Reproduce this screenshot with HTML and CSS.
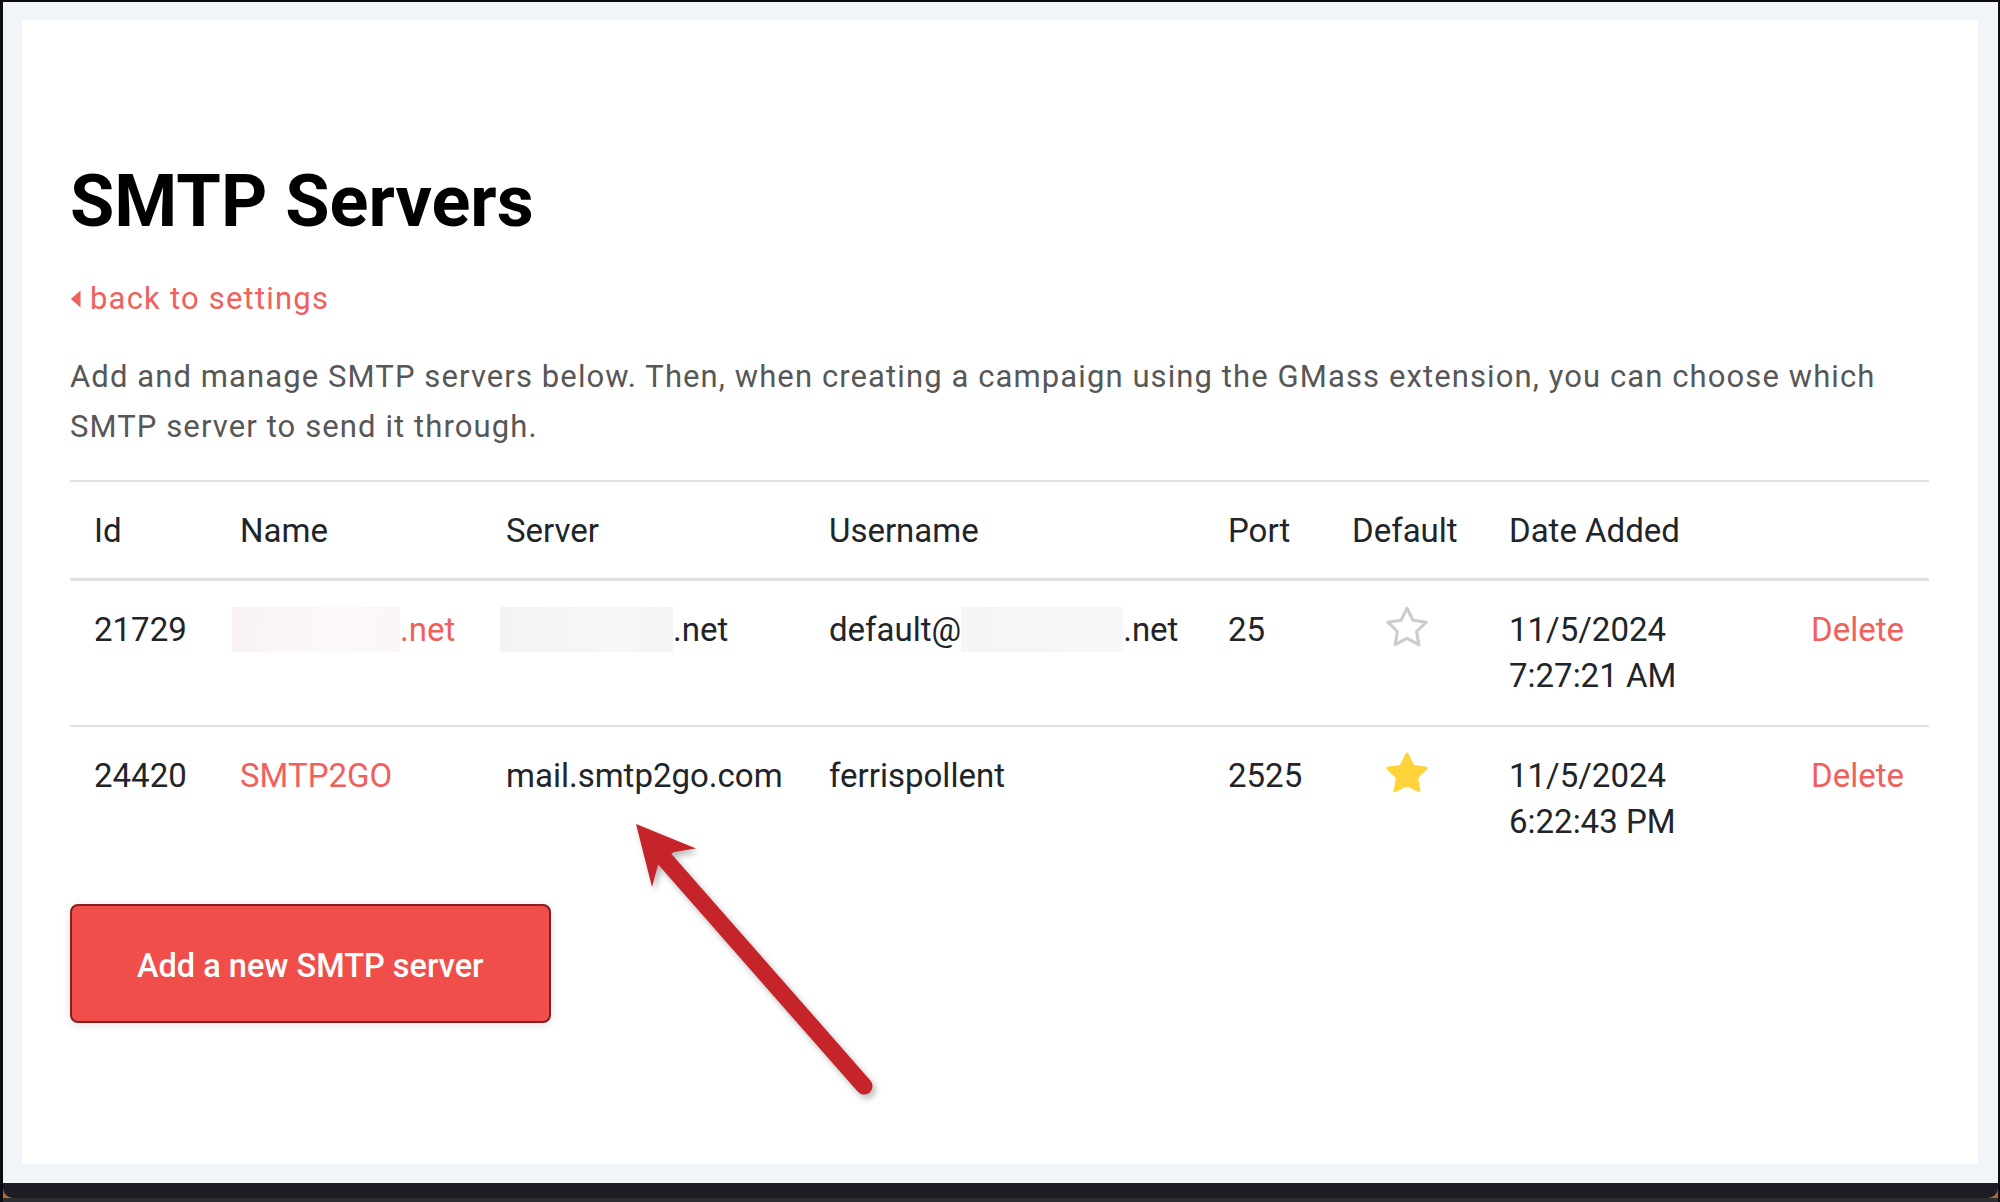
FILE: index.html
```html
<!DOCTYPE html>
<html lang="en">
<head>
<meta charset="utf-8">
<title>SMTP Servers</title>
<link rel="stylesheet" href="styles.css">
</head>
<body>
<div class="frame">
  <main class="panel">
    <h1 class="title">SMTP Servers</h1>
    <a class="back" href="#"><svg class="caret" viewBox="0 0 11 18"><polygon points="10.5,0.5 10.5,17.5 0.8,9"/></svg><span>back to settings</span></a>
    <p class="intro">Add and manage SMTP servers below. Then, when creating a campaign using the GMass extension, you can choose which SMTP server to send it through.</p>
    <table class="servers">
      <colgroup>
        <col class="c-id"><col class="c-name"><col class="c-server"><col class="c-user"><col class="c-port"><col class="c-default"><col class="c-date"><col class="c-action">
      </colgroup>
      <thead>
        <tr><th>Id</th><th>Name</th><th>Server</th><th>Username</th><th>Port</th><th>Default</th><th>Date Added</th><th></th></tr>
      </thead>
      <tbody>
        <tr>
          <td>21729</td>
          <td><a class="link" href="#"><span class="redact redact-name"></span>.net</a></td>
          <td><span class="redact redact-server"></span>.net</td>
          <td>default@<span class="redact redact-user"></span>.net</td>
          <td>25</td>
          <td class="center"><svg class="star star-off" viewBox="0 0 24 24"><polygon points="12 2.2 15.09 8.46 22 9.47 17 14.34 18.18 21.22 12 17.97 5.82 21.22 7 14.34 2 9.47 8.91 8.46"/></svg></td>
          <td>11/5/2024<br>7:27:21 AM</td>
          <td><a class="link" href="#">Delete</a></td>
        </tr>
        <tr>
          <td>24420</td>
          <td><a class="link" href="#">SMTP2GO</a></td>
          <td>mail.smtp2go.com</td>
          <td>ferrispollent</td>
          <td>2525</td>
          <td class="center"><svg class="star star-on" viewBox="0 0 24 24"><polygon points="12 2.2 15.09 8.46 22 9.47 17 14.34 18.18 21.22 12 17.97 5.82 21.22 7 14.34 2 9.47 8.91 8.46"/></svg></td>
          <td>11/5/2024<br>6:22:43 PM</td>
          <td><a class="link" href="#">Delete</a></td>
        </tr>
      </tbody>
    </table>
    <button class="add-btn" type="button">Add a new SMTP server</button>
  </main>
  <div class="dock"><div class="dock-bar"></div></div>
</div>
<svg class="annotation" viewBox="0 0 300 320">
  <line class="arrow-shaft" x1="62" y1="56" x2="264" y2="286"/>
  <polygon class="arrow-head" points="36,24 96,48.5 74,52 62,60 58,65 52,87"/>
</svg>
</body>
</html>
```
FILE: styles.css
```css
* { box-sizing: border-box; }
html, body { margin: 0; padding: 0; }
body {
  background: #000;
  font-family: Roboto, "Liberation Sans", Arial, sans-serif;
}
.frame {
  width: 2000px;
  height: 1202px;
  background: #f1f4f8;
  border-top: 2px solid #0d0d0f;
  border-left: 3px solid #0d0d0f;
  border-right: 2px solid #0d0d0f;
  display: flex;
  flex-direction: column;
}
.panel {
  height: 1144px;
  margin: 18px 20px 0 19px;
  background: #fff;
  padding: 138px 49px 0 48px;
}
.dock {
  margin-top: 19px;
  height: 19px;
  background: linear-gradient(#c4622a 0 15px, #2e2e32 15px);
}
.dock-bar {
  height: 15px;
  background: #1c1c24;
  border-radius: 0 0 10px 10px;
}
.title {
  margin: 0;
  font-size: 72px;
  line-height: 88px;
  font-weight: 700;
  color: #000;
}
.back {
  display: flex;
  align-items: center;
  width: max-content;
  margin-top: 33px;
  font-size: 31px;
  line-height: 40px;
  letter-spacing: 1.2px;
  color: #f0605d;
  text-decoration: none;
}
.caret {
  width: 11px;
  height: 18px;
  margin-right: 9px;
  fill: currentColor;
}
.intro {
  margin: 33px 0 0;
  font-size: 31px;
  line-height: 50px;
  letter-spacing: 1.1px;
  color: #575757;
}
.servers {
  margin-top: 28px;
  width: 100%;
  border-collapse: separate;
  border-spacing: 0;
  table-layout: fixed;
  font-size: 33px;
  line-height: 46px;
  color: #212529;
}
.c-id { width: 146px; }
.c-name { width: 266px; }
.c-server { width: 323px; }
.c-user { width: 399px; }
.c-port { width: 124px; }
.c-default { width: 157px; }
.c-date { width: 302px; }
.c-action { width: 142px; }
.servers th {
  text-align: left;
  font-weight: 400;
  padding: 26px 24px 24px;
  border-top: 2px solid #dee2e6;
  border-bottom: 3px solid #dee2e6;
  white-space: nowrap;
}
.servers td {
  padding: 26px 24px;
  vertical-align: top;
  white-space: nowrap;
}
.servers tbody tr + tr td {
  border-top: 2px solid #dee2e6;
}
.servers td.center { text-align: center; }
.link {
  color: #f0605d;
  text-decoration: none;
}
.redact {
  display: inline-block;
  height: 45px;
  vertical-align: -11px;
}
.redact-name {
  width: 168px;
  margin-left: -8px;
  background: linear-gradient(100deg, #faf2f2, #fdf8f8 60%, #fcf6f6);
}
.redact-server {
  width: 173px;
  margin-left: -6px;
  background: linear-gradient(90deg, #f3f3f3, #f7f7f7 70%, #f4f4f4);
}
.redact-user {
  width: 162px;
  background: linear-gradient(90deg, #f5f5f5, #f7f7f7);
}
.star {
  display: block;
  width: 46px;
  height: 46px;
  margin: -3px auto 0;
}
.star polygon {
  stroke-width: 1.6;
  stroke-linejoin: round;
}
.star-off polygon {
  fill: none;
  stroke: #cccccc;
}
.star-on polygon {
  fill: #ffd43b;
  stroke: #ffd43b;
}
.add-btn {
  display: block;
  margin-top: 33px;
  height: 119px;
  padding: 4px 65px 0;
  border: 2px solid #8a1d1d;
  border-radius: 8px;
  background: #f04e4a;
  color: #fff;
  font-family: Roboto, "Liberation Sans", Arial, sans-serif;
  font-size: 32.5px;
  line-height: 40px;
  font-weight: 500;
  box-shadow: 0 2px 10px rgba(0, 0, 0, 0.12);
}
.annotation {
  position: absolute;
  left: 600px;
  top: 800px;
  width: 300px;
  height: 320px;
  overflow: visible;
  filter: drop-shadow(3px 4px 3px rgba(0, 0, 0, 0.28));
}
.arrow-shaft {
  stroke: #c4242a;
  stroke-width: 17;
  stroke-linecap: round;
}
.arrow-head {
  fill: #c4242a;
}
```
